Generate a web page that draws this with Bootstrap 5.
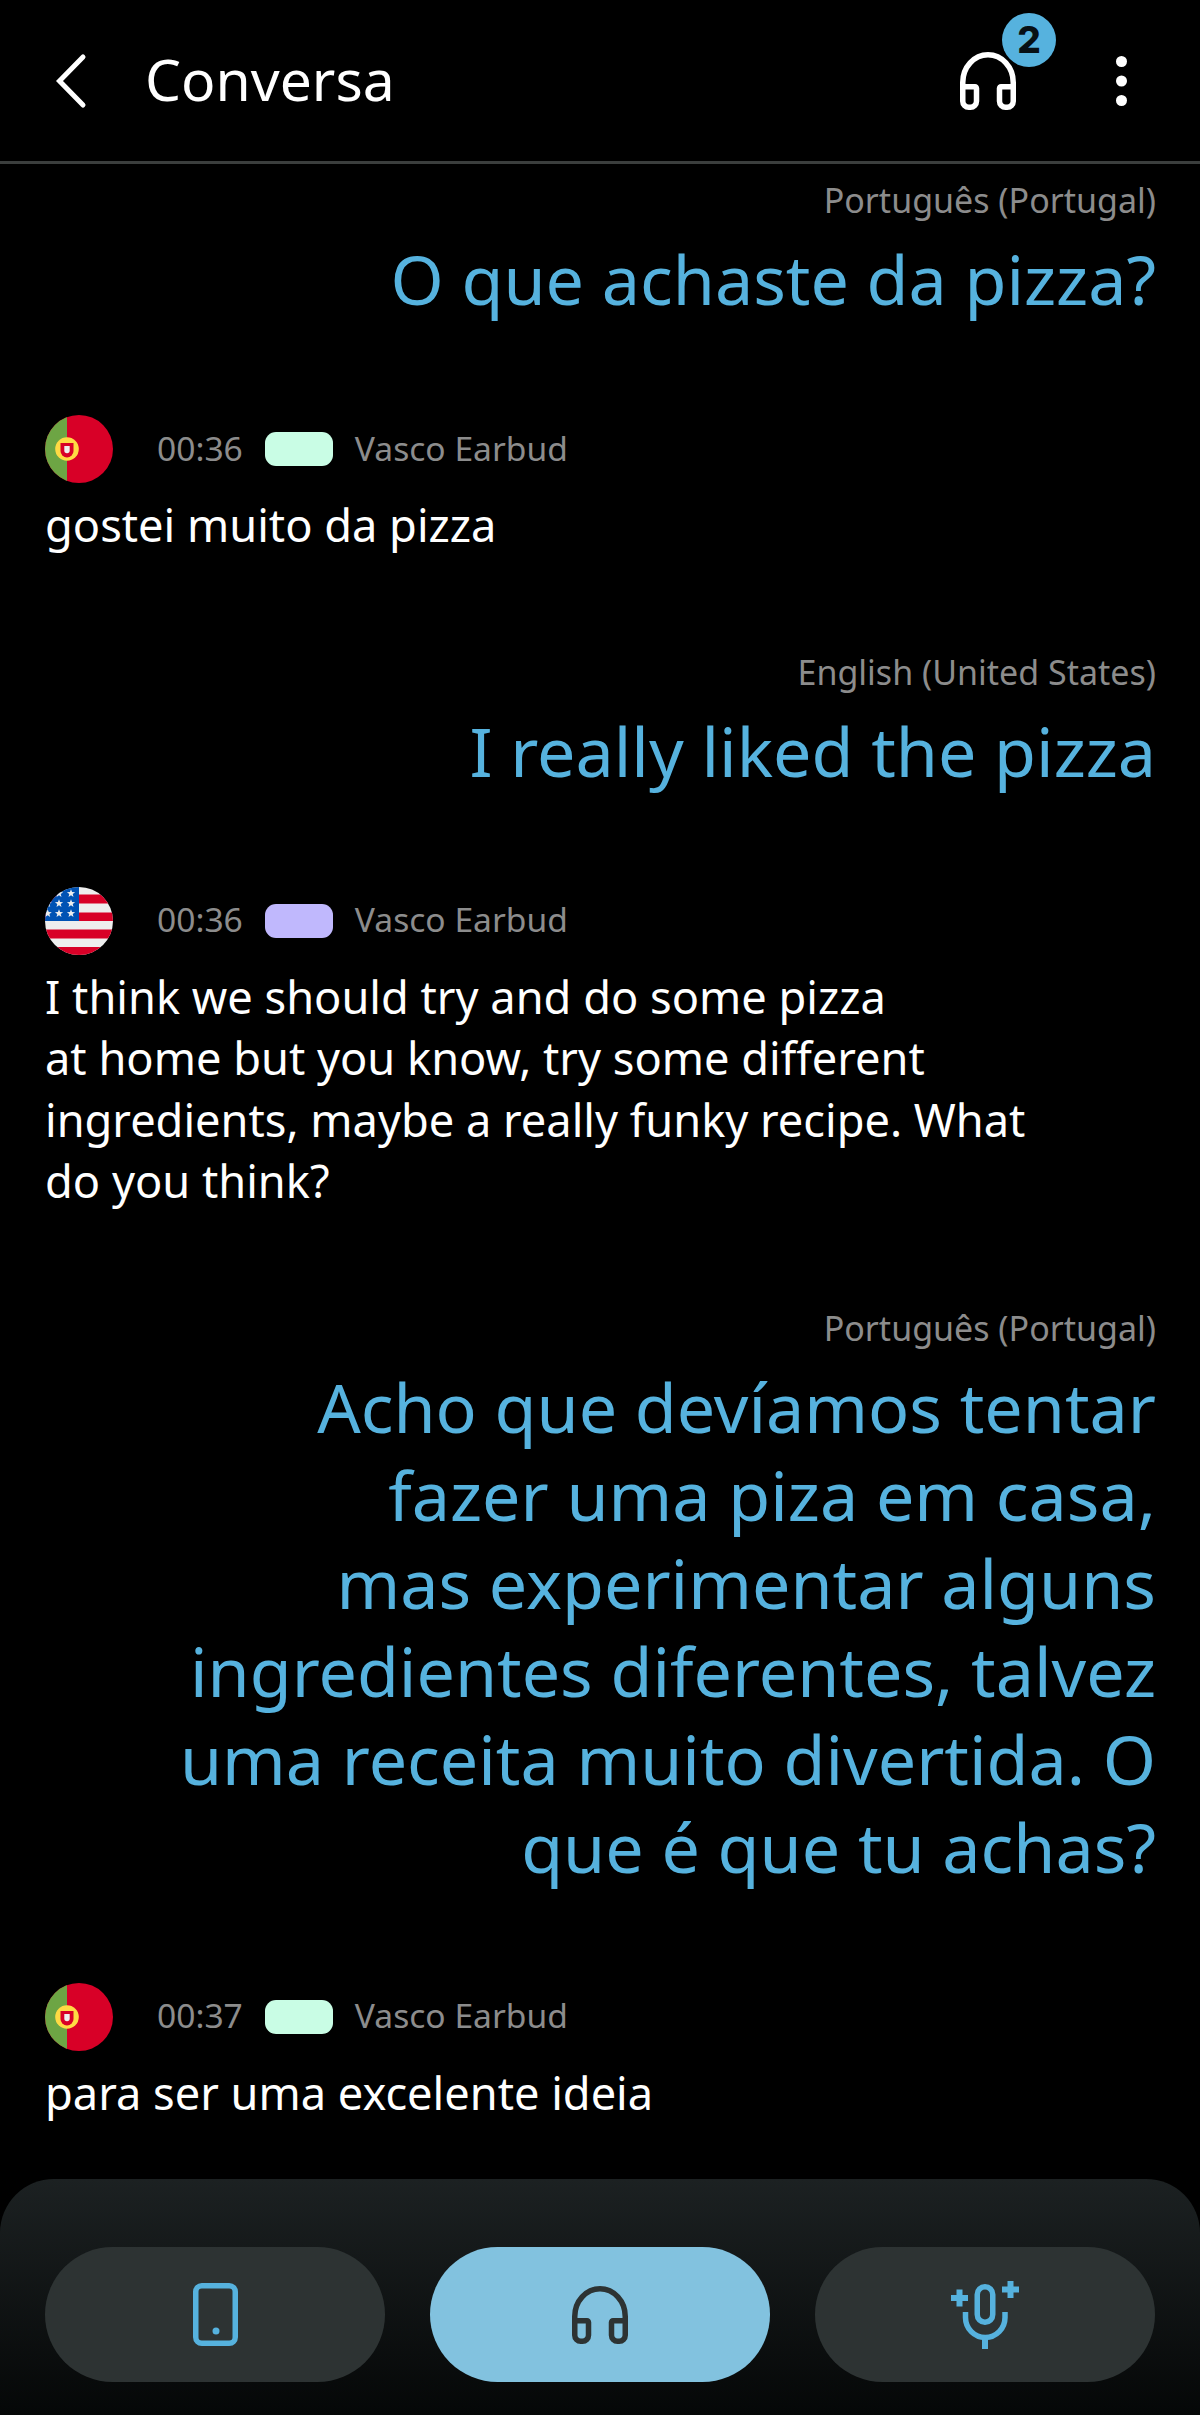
<!DOCTYPE html>
<html lang="pt">
<head>
  <meta charset="UTF-8">
  <meta name="viewport" content="width=device-width, initial-scale=1">
  <title>Conversa</title>
  <link href="https://cdn.jsdelivr.net/npm/bootstrap@5.3.3/dist/css/bootstrap.min.css" rel="stylesheet">
  <style>
    html, body { height: 100%; }
    body {
      background: #000;
      color: #fff;
      font-family: "Noto Sans", sans-serif;
      height: 2415px;
      overflow: hidden;
    }
    .top-bar { height: 164px; border-bottom: 3px solid #3b3e3d; padding: 0 73px 0 54px; }
    .back-btn { width: 40px; margin-right: 51px; }
    .top-title { font-size: 57px; line-height: 1; margin-top: -3px; }
    .head-icon { position: relative; width: 56px; height: 58px; margin-right: 100px; }
    .count-dot {
      position: absolute; left: 42px; top: -39px;
      width: 54px; height: 54px;
      background: #56b2de; color: #071015;
      font-size: 37px; font-weight: 800; font-family: "Inter", sans-serif;
    }
    .chat-list { padding: 13px 44px 0 45px; }
    .lang-label { font-size: 34px; line-height: 46px; color: #8c8c8c; }
    .big-line { font-size: 68.2px; line-height: 88px; color: #56b2de; margin-top: 12px; margin-bottom: 92px; }
    .msg-meta { height: 68px; font-size: 33.6px; color: #8c8c8c; margin-bottom: 11px; }
    .msg-meta svg { margin-right: 44px; }
    .meta-txt { margin-top: -2px; }
    .sig-pill { width: 68px; height: 34px; border-radius: 11px; margin: 0 22px 0 22px; }
    .sig-green { background: #c9fde5; }
    .sig-violet { background: #c0b8fd; }
    .msg-text { font-size: 45.2px; line-height: 61.5px; margin-bottom: 93px; }
    .bottom-panel {
      position: absolute; left: 0; right: 0; bottom: 0; height: 236px;
      border-radius: 54px 54px 0 0;
      background: linear-gradient(#1c2122, #050707);
      padding: 68px 45px 33px 45px;
      gap: 45px;
    }
    .mode-btn {
      flex: 1; height: 135px; border: 0; padding: 0;
      background: #2d3333;
    }
    .mode-btn.on { background: #82c2df; }
  </style>
</head>
<body>

<!-- barra de cima -->
<header class="top-bar d-flex align-items-center">
  <div class="back-btn d-flex">
    <svg width="36" height="60" viewBox="0 0 36 60" fill="none" stroke="#fff" stroke-width="5" stroke-linecap="round" stroke-linejoin="miter"><path d="M29 6 5.500 30 29 54"/></svg>
  </div>
  <div class="top-title flex-grow-1">Conversa</div>
  <div class="head-icon">
    <svg width="56" height="58" viewBox="0 0 56 58" fill="none" stroke="#fff" stroke-width="5.5"><use href="#phones"/></svg>
    <div class="count-dot rounded-circle d-flex align-items-center justify-content-center">2</div>
  </div>
  <svg width="11" height="50" viewBox="0 0 11 50" fill="#fff"><circle cx="5.5" cy="5.5" r="5.5"/><circle cx="5.5" cy="25" r="5.5"/><circle cx="5.5" cy="44.5" r="5.5"/></svg>
</header>

<main class="chat-list">
  <div class="text-end">
    <div class="lang-label">Português (Portugal)</div>
    <div class="big-line">O que achaste da pizza?</div>
  </div>
  <div>
    <div class="msg-meta d-flex align-items-center">
      <svg width="68" height="68" viewBox="0 0 68 68"><use href="#flag-pt"/></svg>
      <span class="meta-txt">00:36</span><span class="sig-pill sig-green"></span><span class="meta-txt">Vasco Earbud</span>
    </div>
    <div class="msg-text">gostei muito da pizza</div>
  </div>

  <div class="text-end">
    <div class="lang-label">English (United States)</div>
    <div class="big-line">I really liked the pizza</div>
  </div>
  <div>
    <div class="msg-meta d-flex align-items-center">
      <svg width="68" height="68" viewBox="0 0 68 68"><use href="#flag-us"/></svg>
      <span class="meta-txt">00:36</span><span class="sig-pill sig-violet"></span><span class="meta-txt">Vasco Earbud</span>
    </div>
    <div class="msg-text">I think we should try and do some pizza<br>at home but you know, try some different<br>ingredients, maybe a really funky recipe. What<br>do you think?</div>
  </div>

  <div class="text-end">
    <div class="lang-label">Português (Portugal)</div>
    <div class="big-line">Acho que devíamos tentar<br>fazer uma piza em casa,<br>mas experimentar alguns<br>ingredientes diferentes, talvez<br>uma receita muito divertida. O<br>que é que tu achas?</div>
  </div>
  <div>
    <div class="msg-meta d-flex align-items-center">
      <svg width="68" height="68" viewBox="0 0 68 68"><use href="#flag-pt"/></svg>
      <span class="meta-txt">00:37</span><span class="sig-pill sig-green"></span><span class="meta-txt">Vasco Earbud</span>
    </div>
    <div class="msg-text">para ser uma excelente ideia</div>
  </div>
</main>

<!-- botoes de baixo -->
<nav class="bottom-panel d-flex">
  <button class="mode-btn btn rounded-pill d-flex align-items-center justify-content-center" type="button">
    <svg width="45" height="63" viewBox="0 0 45 63" fill="none" stroke="#56b2de" stroke-width="5.5"><rect x="2.75" y="2.75" width="39.5" height="57.5" rx="6"/><circle cx="23" cy="48" r="3.5" fill="#56b2de" stroke="none"/></svg>
  </button>
  <button class="mode-btn on btn rounded-pill d-flex align-items-center justify-content-center" type="button">
    <svg width="56" height="58" viewBox="0 0 56 58" fill="none" stroke="#2d3333" stroke-width="5.5"><use href="#phones"/></svg>
  </button>
  <button class="mode-btn btn rounded-pill d-flex align-items-center justify-content-center" type="button">
    <svg width="68" height="68" viewBox="0 0 68 68" fill="none" stroke="#56b2de" stroke-width="5.5"><rect x="26.25" y="5.75" width="15.5" height="35.5" rx="7.75"/><path d="M14.5 31v5.500a19.750 20 0 0 0 39.500 0V31"/><path d="M34 56v12M0 17h17M8.500 8.500v17M51 8.500h17M59.500 0v17" stroke-width="6"/></svg>
  </button>
</nav>

<!-- iconos y banderas -->
<svg width="0" height="0" class="position-absolute">
  <defs>
    <path id="phones" d="M2.750 34.750H15a1.500 1.500 0 0 1 1.500 1.500V49.250a6 6 0 0 1-6 6H8.750a6 6 0 0 1-6-6V30.500A25.250 27.750 0 0 1 53.250 30.500V49.250a6 6 0 0 1-6 6h-1.750a6 6 0 0 1-6-6V36.250a1.500 1.500 0 0 1 1.500-1.500h12.250"/>
    <clipPath id="round-clip"><circle cx="34" cy="34" r="34"/></clipPath>
    <symbol id="flag-pt" viewBox="0 0 68 68">
      <g clip-path="url(#round-clip)">
        <rect width="68" height="68" fill="#d80027"/>
        <rect width="22" height="68" fill="#6da544"/>
        <circle cx="22" cy="34" r="11.800" fill="#ffda44"/>
        <path d="M15.500 28h13v8a6.500 6.500 0 0 1-13 0z" fill="#d80027"/>
        <path d="M19.300 31h5.400v4.500a2.700 2.700 0 0 1-5.400 0z" fill="#eee"/>
      </g>
    </symbol>
    <symbol id="flag-us" viewBox="0 0 68 68">
      <g clip-path="url(#round-clip)">
        <rect width="68" height="68" fill="#eee"/>
        <path d="M0 7.500h68v9H0zM0 25.500h68V34H0zM0 42.500h68v9H0zM0 60h68v8H0z" fill="#d80027"/>
        <rect width="34" height="34" fill="#0052b4"/>
        <g fill="#eee">
          <path id="star" d="M26 2.200 27.060 5.040 30.100 5.170 27.710 7.060 28.500 9.980 26 8.300 23.500 9.980 24.290 7.060 21.900 5.170 24.940 5.040z"/>
          <use href="#star" x="-12"/>
          <use href="#star" y="10"/><use href="#star" x="-12" y="10"/><use href="#star" x="-23.300" y="10"/>
          <use href="#star" y="20"/><use href="#star" x="-12" y="20"/><use href="#star" x="-23.300" y="20"/>
        </g>
      </g>
    </symbol>
  </defs>
</svg>

<script src="https://cdn.jsdelivr.net/npm/bootstrap@5.3.3/dist/js/bootstrap.bundle.min.js"></script>
</body>
</html>
